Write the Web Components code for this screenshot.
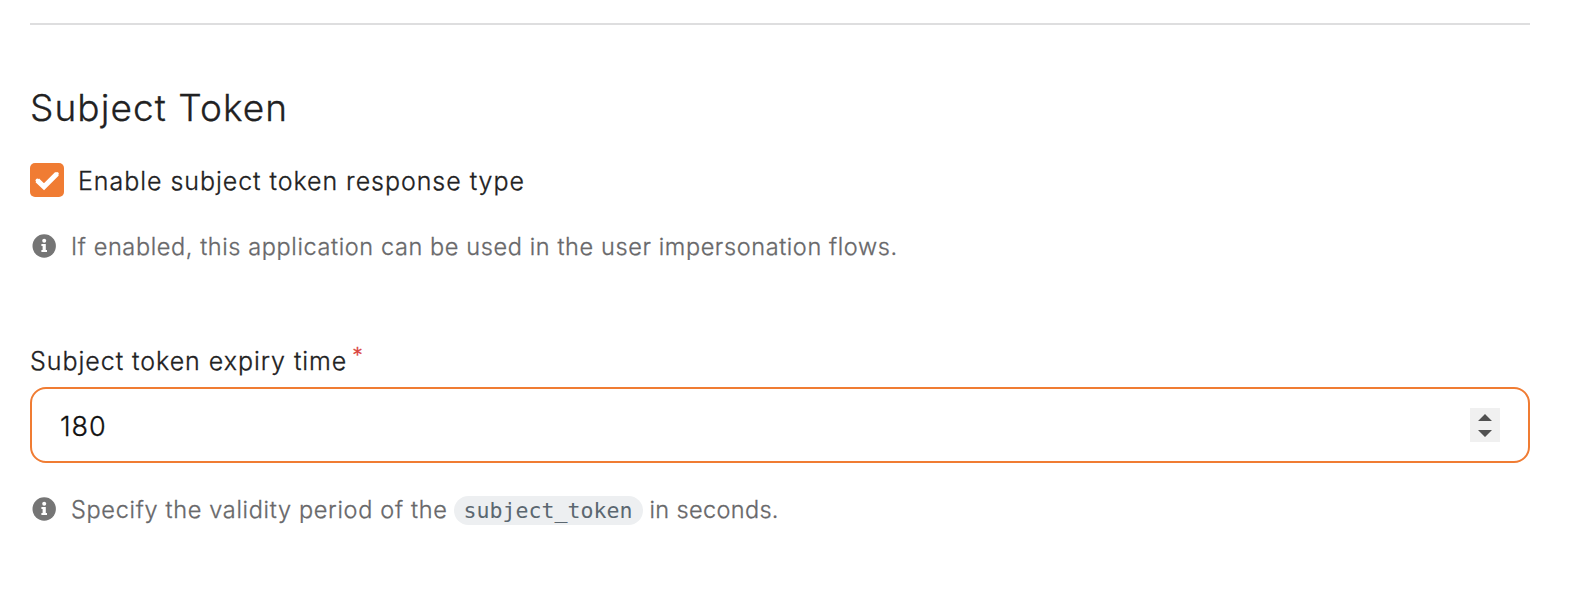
<!DOCTYPE html>
<html lang="en">
<head>
<meta charset="utf-8">
<title>Subject Token</title>
<style>
body{margin:0;background:#fff;font-family:Inter,"Liberation Sans",sans-serif;font-weight:300;-webkit-text-stroke-width:.3px;color:#212122}
</style>
</head>
<body>
<settings-section heading="Subject Token">
  <check-field>Enable subject token response type</check-field>
  <hint-text style="margin-top:34px;--spacing:.61px">If enabled, this application can be used in the user impersonation flows.</hint-text>
  <number-field label="Subject token expiry time" value="180" required></number-field>
  <hint-text style="margin-top:31px;--spacing:.68px">Specify the validity period of the<code-chip>subject_token</code-chip><span style="letter-spacing:.35px">in seconds.</span></hint-text>
</settings-section>
<script>
class SettingsSection extends HTMLElement{
  constructor(){
    super();
    this.attachShadow({mode:'open'}).innerHTML=`
<style>
:host{display:flex;flex-direction:column;box-sizing:border-box;width:1576px;height:604px;padding:23px 46px 0 30px;overflow:hidden}
hr{width:100%;height:2px;margin:0;border:0;background:#dededf;flex:none}
h2{margin:61px 0 33px;font-size:37px;line-height:44px;font-weight:inherit;letter-spacing:1.07px;white-space:nowrap}
</style>
<hr><h2></h2><slot></slot>`;
  }
  connectedCallback(){this.shadowRoot.querySelector('h2').textContent=this.getAttribute('heading')}
}
customElements.define('settings-section',SettingsSection);

class CheckField extends HTMLElement{
  constructor(){
    super();
    this.attachShadow({mode:'open'}).innerHTML=`
<style>
:host{display:flex;align-items:center;height:34px;gap:14px}
.box{width:34px;height:34px;border-radius:5px;background:#f07c33;flex:none}
svg{display:block}
label{font-size:25px;line-height:34px;padding-top:2px;letter-spacing:.95px;white-space:nowrap}
</style>
<span class="box"><svg width="34" height="34" viewBox="0 0 34 34"><path d="M7.3 17.4 14 23.8 27 10.8" fill="none" stroke="#fff" stroke-width="5.1" stroke-linejoin="miter"/><path d="M7.3 17.4 14 23.8 27 10.8" fill="none" stroke="#fff" stroke-width="3.6" stroke-linecap="round"/></svg></span>
<label><slot></slot></label>`;
  }
}
customElements.define('check-field',CheckField);

class InfoIcon extends HTMLElement{
  constructor(){
    super();
    this.attachShadow({mode:'open'}).innerHTML=`
<style>:host{display:block;width:24px;height:24px;flex:none}svg{display:block}</style>
<svg width="24" height="24" viewBox="0 0 24 24"><circle cx="12.2" cy="12" r="11.7" fill="#757575"/><circle cx="12.2" cy="6.7" r="2" fill="#fff"/><path d="M9.4 10H13.8V16H15V18H9.4V16H10.6V12H9.4Z" fill="#fff"/></svg>`;
  }
}
customElements.define('info-icon',InfoIcon);

class HintText extends HTMLElement{
  constructor(){
    super();
    this.attachShadow({mode:'open'}).innerHTML=`
<style>
:host{display:flex;align-items:center;height:30px;padding-left:2px;gap:15px;color:#68686a}
.text{display:flex;align-items:center;font-size:23.5px;line-height:30px;padding-top:1px;letter-spacing:var(--spacing);white-space:nowrap}
</style>
<info-icon></info-icon><div class="text"><slot></slot></div>`;
  }
}
customElements.define('hint-text',HintText);

class CodeChip extends HTMLElement{
  constructor(){
    super();
    this.attachShadow({mode:'open'}).innerHTML=`
<style>
:host{display:block;box-sizing:border-box;width:189px;height:29px;margin:1px 7px 0 6px;border-radius:15px;background:#edeff1;color:#5b6770;text-align:center;font:400 21.6px/29px "DejaVu Sans Mono",monospace;letter-spacing:0;-webkit-text-stroke-width:0}
</style><slot></slot>`;
  }
}
customElements.define('code-chip',CodeChip);

class NumberField extends HTMLElement{
  constructor(){
    super();
    this.attachShadow({mode:'open'}).innerHTML=`
<style>
:host{display:flex;flex-direction:column;margin-top:84px}
.label{display:flex;height:42px;font-size:25px;line-height:32px;letter-spacing:.96px;white-space:nowrap}
.star{margin-left:5px;font-size:21px;line-height:21px;color:#d9423c;letter-spacing:0}
.field{display:flex;align-items:center;justify-content:space-between;box-sizing:border-box;height:76px;padding:0 28px;border:2px solid #f07c33;border-radius:16px;background:#fff;color:#101010}
.value{font-size:27px;line-height:34px;letter-spacing:.9px;padding-top:3px}
.spin{width:30px;height:34px;background:#f0f0f0}
svg{display:block}
</style>
<div class="label"><span class="name"></span><span class="star">*</span></div>
<div class="field"><span class="value"></span><span class="spin"><svg width="30" height="34" viewBox="0 0 30 34"><path d="M8 13 15 6 22 13ZM8 22H22L15 29Z" fill="#505050"/></svg></span></div>`;
  }
  connectedCallback(){
    const r=this.shadowRoot;
    r.querySelector('.name').textContent=this.getAttribute('label');
    r.querySelector('.value').textContent=this.getAttribute('value');
    r.querySelector('.star').hidden=!this.hasAttribute('required');
  }
}
customElements.define('number-field',NumberField);
</script>
</body>
</html>
